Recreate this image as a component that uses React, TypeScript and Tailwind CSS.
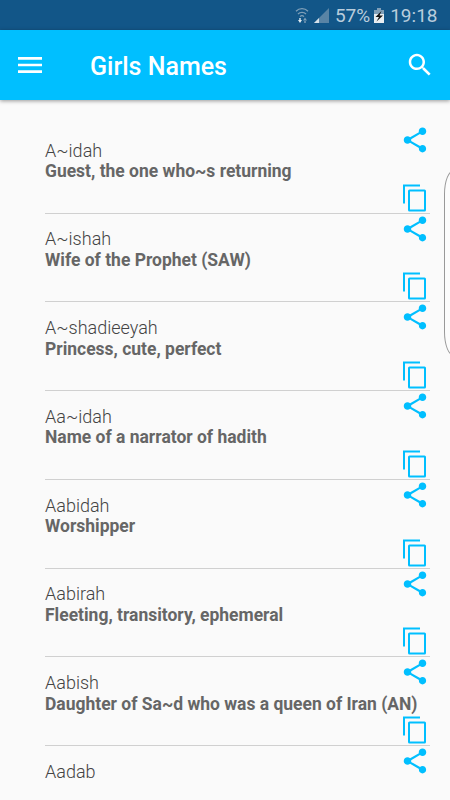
const names = [
  { name: 'A~idah', meaning: 'Guest, the one who~s returning' },
  { name: 'A~ishah', meaning: 'Wife of the Prophet (SAW)' },
  { name: 'A~shadieeyah', meaning: 'Princess, cute, perfect' },
  { name: 'Aa~idah', meaning: 'Name of a narrator of hadith' },
  { name: 'Aabidah', meaning: 'Worshipper' },
  { name: 'Aabirah', meaning: 'Fleeting, transitory, ephemeral' },
  { name: 'Aabish', meaning: 'Daughter of Sa~d who was a queen of Iran (AN)' },
  { name: 'Aadab', meaning: '' },
];

function ShareIcon() {
  return (
    <svg viewBox="0 0 24 24" className="size-[30px] fill-current">
      <path d="M18 16.08c-.76 0-1.44.3-1.96.77L8.91 12.7c.05-.23.09-.46.09-.7s-.04-.47-.09-.7l7.05-4.11c.54.5 1.25.81 2.04.81 1.66 0 3-1.34 3-3s-1.34-3-3-3-3 1.34-3 3c0 .24.04.47.09.7L8.04 9.81C7.5 9.31 6.79 9 6 9c-1.66 0-3 1.34-3 3s1.34 3 3 3c.79 0 1.5-.31 2.04-.81l7.12 4.16c-.05.21-.08.43-.08.65 0 1.61 1.31 2.92 2.92 2.92s2.92-1.31 2.92-2.92-1.31-2.92-2.92-2.92z" />
    </svg>
  );
}

function CopyIcon() {
  return (
    <svg viewBox="0 0 30 30" className="size-[30px]" fill="none" stroke="currentColor" strokeWidth="2">
      <path d="M4 20.5V2.5h16" />
      <rect x="9" y="7.5" width="16" height="20" rx="0.5" />
    </svg>
  );
}

function StatusBar() {
  return (
    <div className="flex h-[30px] shrink-0 items-center justify-end bg-[#125688] pr-[12.5px] text-[#b9cddc]">
      <svg viewBox="0 0 14 18" className="mr-[5px] h-[18px] w-[14px]" fill="none">
        <path d="M1 5.2a8.5 8.5 0 0 1 12 0M3 8a5.6 5.6 0 0 1 8 0M5 10.6a2.9 2.9 0 0 1 4 0" stroke="#7f9fb8" strokeWidth="1.3" />
        <path d="M3 14h4l-2 3zM4.3 12h1.4v2H4.3z" fill="#e2ebf1" />
        <path d="M8 14.5h4l-2-3zM9.3 14h1.4v3H9.3z" fill="#7f9fb8" />
      </svg>
      <svg viewBox="0 0 15 15" className="mr-[6px] size-[15px]">
        <path d="M15 0v15H0z" fill="#5984a5" />
        <path d="M5 10v5H0z" fill="#d5e1ea" />
      </svg>
      <span className="pt-px text-[19px] leading-[30px]">57%</span>
      <svg viewBox="0 0 10 15" className="mr-[6px] ml-[4px] h-[15px] w-[10px]">
        <path d="M3 0h4v2h3v13H0V2h3z" fill="#e8eef2" />
        <path d="M3 0h4v2h3v4H0V2h3z" fill="#7f9fb8" />
        <path d="M7.5 3 1.5 9H5l-2.500 4.500L9 7.5H5.500z" fill="#111" />
      </svg>
      <span className="pt-px text-[19px] leading-[30px]">19:18</span>
    </div>
  );
}

function AppBar() {
  return (
    <header className="z-10 flex h-[70px] shrink-0 items-center bg-[#00bfff] pr-[15px] pl-[14px] text-white shadow-[0_1px_4px_rgba(0,0,0,0.4)]">
      <button aria-label="Menu">
        <svg viewBox="0 0 24 24" className="size-8 fill-current">
          <path d="M3 18h18v-2H3v2zm0-5h18v-2H3v2zm0-7v2h18V6H3z" />
        </svg>
      </button>
      <h1 className="ml-11 flex-1 pt-[3px] text-[25px] font-medium">Girls Names</h1>
      <button aria-label="Search">
        <svg viewBox="0 0 24 24" className="size-[30px] fill-current">
          <path d="M15.5 14h-.79l-.28-.27C15.41 12.59 16 11.11 16 9.5 16 5.91 13.09 3 9.5 3S3 5.91 3 9.5 5.91 16 9.5 16c1.61 0 3.09-.59 4.23-1.57l.27.28v.79l5 4.99L20.49 19l-4.99-5zm-6 0C7.01 14 5 11.99 5 9.5S7.01 5 9.5 5 14 7.01 14 9.5 11.99 14 9.5 14z" />
        </svg>
      </button>
    </header>
  );
}

export default function App() {
  return (
    <div className="relative flex h-[800px] w-[450px] flex-col overflow-hidden bg-[#fafafa] font-['Roboto',sans-serif]">
      <StatusBar />
      <AppBar />
      <ul className="mt-[24.75px] ml-[45px] w-[385px]">
        {names.map((item) => (
          <li key={item.name} className="flex h-[88.77px] border-b border-[#d0d0d0]">
            <div className="w-[355px] pt-[14.75px] whitespace-nowrap">
              <p className="text-[18px] leading-[21px] font-light text-[#444]">{item.name}</p>
              <p className="pt-[0.5px] text-[17.48px] leading-[21px] font-bold text-[#666]">{item.meaning}</p>
            </div>
            <div className="flex w-[30px] shrink-0 flex-col justify-between text-[#00bfff]">
              <button aria-label="Share">
                <ShareIcon />
              </button>
              <button aria-label="Copy">
                <CopyIcon />
              </button>
            </div>
          </li>
        ))}
      </ul>
      {/* edge panel handle */}
      <div className="absolute top-[170px] left-[444px] h-[186px] w-5 rounded-[10px/24px] border border-[#999] bg-[#fcfcfc]" />
    </div>
  );
}
